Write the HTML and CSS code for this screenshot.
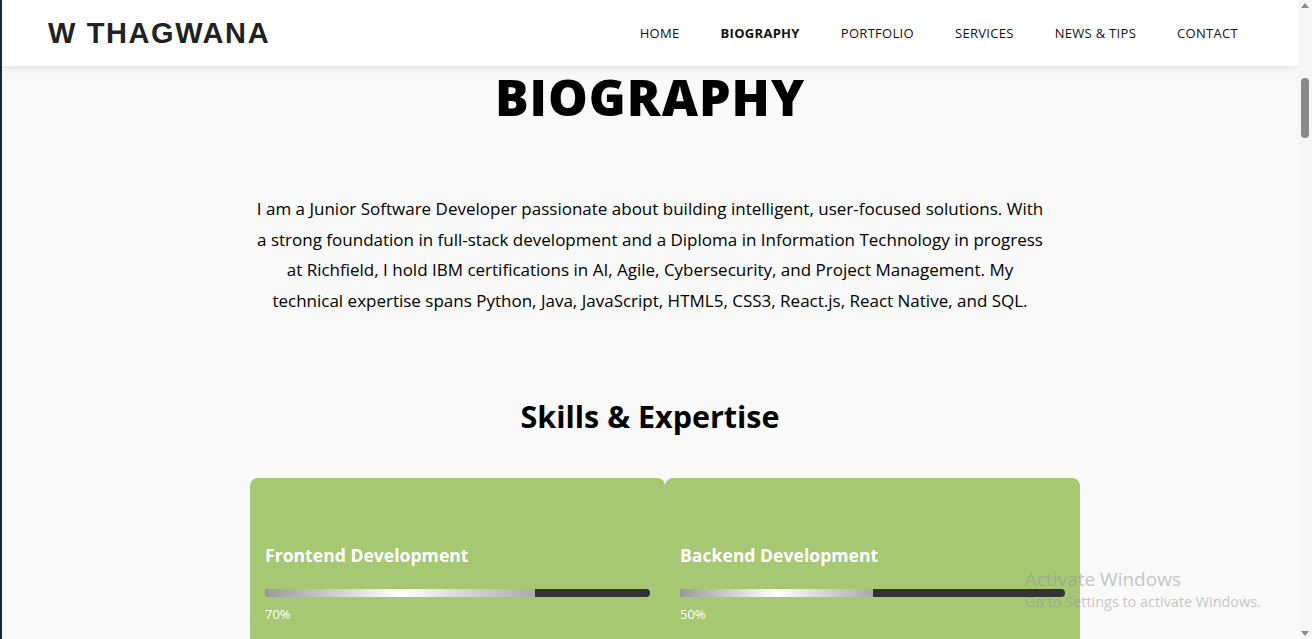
FILE: index.html
```html
<!DOCTYPE html>
<html lang="en">
<head>
<meta charset="utf-8">
<title>W Thagwana - Biography</title>
<link rel="stylesheet" href="styles.css">
</head>
<body>
<div class="frame">
  <div class="edge"></div>
  <div class="viewport">
    <header class="site-header">
      <div class="logo">W THAGWANA</div>
      <nav class="nav">
        <a href="#">HOME</a>
        <a href="#" class="active">BIOGRAPHY</a>
        <a href="#">PORTFOLIO</a>
        <a href="#">SERVICES</a>
        <a href="#">NEWS &amp; TIPS</a>
        <a href="#">CONTACT</a>
      </nav>
    </header>
    <main class="content">
      <h1 class="page-title">BIOGRAPHY</h1>
      <p class="bio">I am a Junior Software Developer passionate about building intelligent, user-focused solutions. With a strong foundation in full-stack development and a Diploma in Information Technology in progress at Richfield, I hold IBM certifications in AI, Agile, Cybersecurity, and Project Management. My technical expertise spans Python, Java, JavaScript, HTML5, CSS3, React.js, React Native, and SQL.</p>
      <h2 class="skills-title">Skills &amp; Expertise</h2>
      <div class="skills">
        <div class="card">
          <h3>Frontend Development</h3>
          <div class="bar"><div class="fill" style="width:70%"></div></div>
          <span class="pct">70%</span>
        </div>
        <div class="card">
          <h3>Backend Development</h3>
          <div class="bar"><div class="fill" style="width:50%"></div></div>
          <span class="pct">50%</span>
        </div>
      </div>
    </main>
    <div class="watermark">
      <div class="wm-title">Activate Windows</div>
      <div class="wm-sub">Go to Settings to activate Windows.</div>
    </div>
  </div>
  <div class="scrollbar">
    <div class="arrow up"></div>
    <div class="track"><div class="thumb"></div></div>
    <div class="arrow down"></div>
  </div>
</div>
</body>
</html>
```
FILE: styles.css
```css
* { box-sizing: border-box; }
html, body {
  margin: 0;
  padding: 0;
  height: 100%;
  overflow: hidden;
}
body {
  font-family: "Open Sans", "Noto Sans", sans-serif;
  color: #000;
  background: #f9f9f9;
}
.frame {
  display: flex;
  height: 639px;
}
.edge {
  width: 2px;
  background: #0e2a47;
  flex: none;
}
.viewport {
  position: relative;
  flex: 1;
  background: #f9f9f9;
  overflow: hidden;
}
.site-header {
  height: 66px;
  background: #fff;
  box-shadow: 0 2px 8px rgba(0,0,0,0.10);
  display: flex;
  align-items: center;
  justify-content: space-between;
  padding: 0 60px 0 46px;
  position: relative;
  z-index: 2;
}
.logo {
  font-family: "Liberation Sans", Arial, sans-serif;
  font-weight: 700;
  font-size: 29px;
  letter-spacing: 1.6px;
  color: #222;
}
.nav {
  display: flex;
  gap: 41px;
}
.nav a {
  text-decoration: none;
  color: #111;
  font-size: 13px;
  letter-spacing: 0.3px;
}
.nav a.active { font-weight: 700; }
.content {
  width: 800px;
  margin: 0 auto;
  text-align: center;
}
.page-title {
  margin: 0;
  font-size: 50px;
  font-weight: 800;
  letter-spacing: 1px;
  line-height: 62px;
}
.bio {
  margin: 66px 0 0;
  font-size: 17px;
  line-height: 30.5px;
}
.skills-title {
  margin: 78px 0 0;
  font-size: 30.5px;
  font-weight: 700;
  line-height: 44px;
}
.skills {
  margin-top: 40px;
  display: grid;
  grid-template-columns: 415px 415px;
  text-align: left;
}
.card {
  background: #a6c873;
  border-radius: 8px;
  padding: 60px 15px 20px;
  height: 200px;
  color: #fff;
}
.card h3 {
  margin: 0;
  font-size: 17.6px;
  font-weight: 700;
  line-height: 34px;
}
.bar {
  margin-top: 17px;
  height: 8px;
  border-radius: 4px;
  background: #333;
  overflow: hidden;
}
.fill {
  height: 100%;
  background: linear-gradient(90deg, #9a9a9a, #ffffff, #aaaaaa);
}
.pct {
  display: block;
  margin-top: 8px;
  font-size: 13px;
}
.watermark {
  position: absolute;
  left: 1023px;
  top: 566px;
  color: rgba(150,150,150,0.55);
  z-index: 3;
}
.wm-title { font-size: 19px; line-height: 26px; }
.wm-sub { font-size: 14.4px; line-height: 20px; }
.scrollbar {
  width: 14px;
  flex: none;
  background: #f6f6f6;
  display: flex;
  flex-direction: column;
  align-items: center;
}
.arrow {
  width: 0;
  height: 0;
  border-left: 4px solid transparent;
  border-right: 4px solid transparent;
}
.arrow.up { border-bottom: 5px solid #8a8a8a; margin-top: 3px; }
.arrow.down { border-top: 5px solid #8a8a8a; margin-bottom: 3px; }
.track { flex: 1; width: 100%; padding-top: 70px; display: flex; justify-content: center; }
.thumb { width: 8px; height: 60px; border-radius: 4px; background: #8a8a8a; }
```
